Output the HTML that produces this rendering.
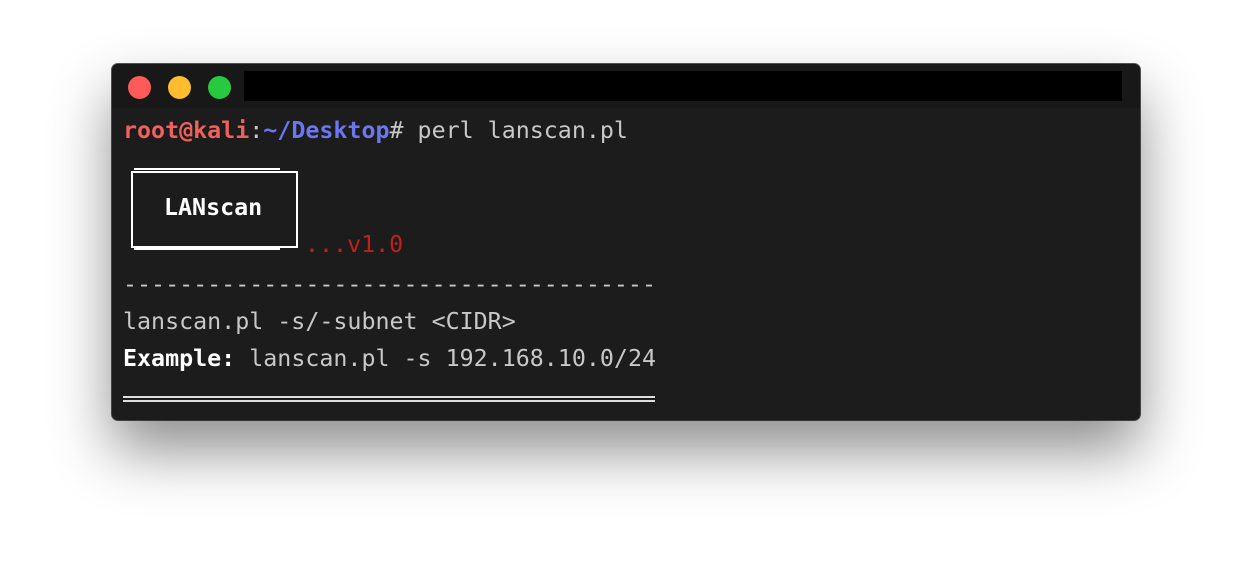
<!DOCTYPE html>
<html><head><style>
body{margin:0;width:1252px;height:580px;background:#fff;overflow:hidden;position:relative;font-family:"DejaVu Sans Mono","Liberation Mono",monospace;}
.win{position:absolute;left:112px;top:64px;width:1028px;height:356px;background:#1c1c1c;border-radius:6px;box-shadow:0 30px 60px rgba(0,0,0,0.45),0 0 0 1px #555;overflow:hidden}
.bar{position:absolute;left:0;top:0;width:100%;height:44px;background:#181818}
.dot{position:absolute;top:12px;width:23px;height:23px;border-radius:50%}
.title{position:absolute;left:132px;top:7px;width:878px;height:30px;background:#000}
.t{position:absolute;font-size:23.3px;line-height:28px;color:#c8c8c8;white-space:pre}
b{font-weight:bold}
</style></head><body>
<div class="win">
<div class="bar">
<div class="dot" style="left:16px;background:#fd5b57"></div>
<div class="dot" style="left:56px;background:#febc2e"></div>
<div class="dot" style="left:96px;background:#28c840"></div>
<div class="title"></div>
</div>
<div class="t" style="left:11px;top:53px"><b style="color:#f0605c">root@kali</b>:<b style="color:#6c76f0">~/Desktop</b># perl lanscan.pl</div>
<div style="position:absolute;left:19px;top:107px;width:163px;height:73px;border:2px solid #fff"></div>
<div style="position:absolute;left:22px;top:104px;width:146px;height:2px;background:#fff"></div>
<div style="position:absolute;left:22px;top:184px;width:146px;height:2px;background:#fff"></div>
<div class="t" style="left:52px;top:130px;color:#fff"><b>LANscan</b></div>
<div class="t" style="left:193px;top:167px;color:#c0201c">...v1.0</div>
<div class="t" style="left:11px;top:207px;color:#c8c8c8">--------------------------------------</div>
<div class="t" style="left:11px;top:244px">lanscan.pl -s/-subnet &lt;CIDR&gt;</div>
<div class="t" style="left:11px;top:281px"><b style="color:#fff">Example:</b> lanscan.pl -s 192.168.10.0/24</div>
<div style="position:absolute;left:11px;top:332px;width:532px;height:2px;background:#ddd"></div>
<div style="position:absolute;left:11px;top:336px;width:532px;height:2px;background:#ddd"></div>
</div>
</body></html>
